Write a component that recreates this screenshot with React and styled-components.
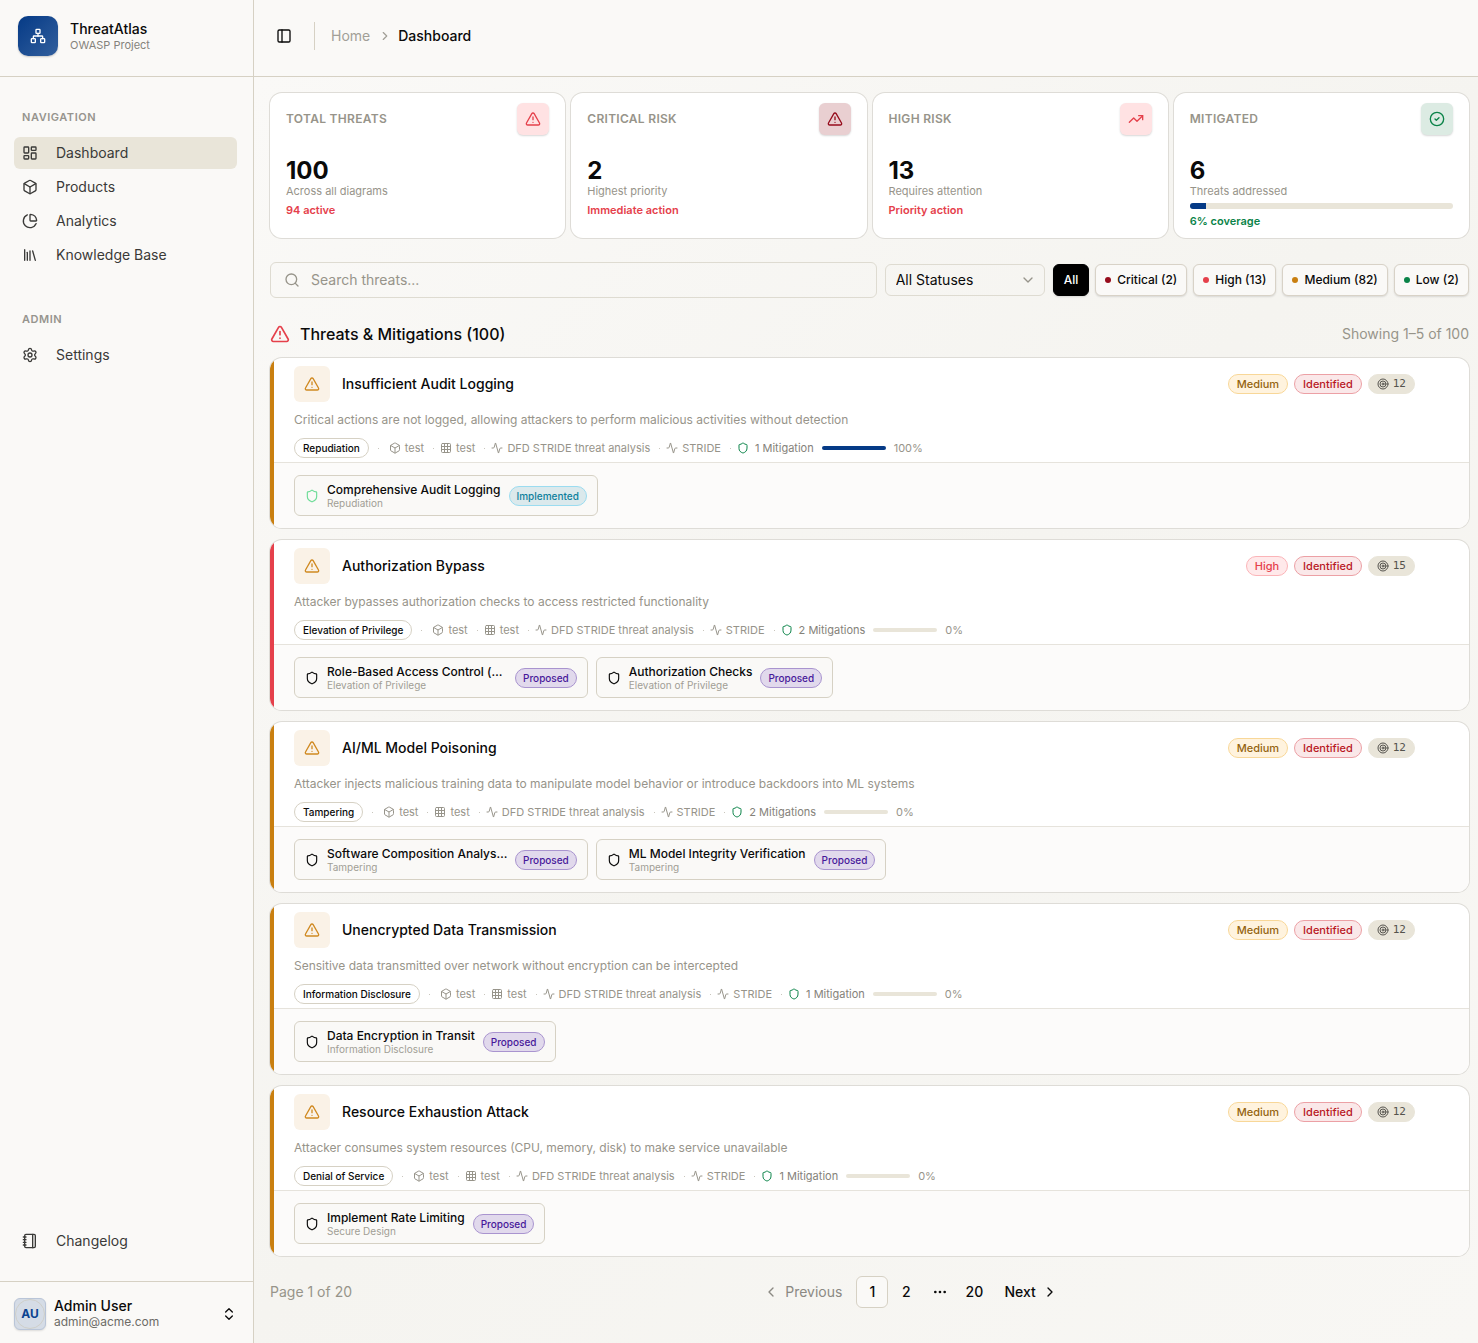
import React from "react";
import styled, { createGlobalStyle, css } from "styled-components";
import {
  Activity,
  Box,
  ChartPie,
  ChevronDown,
  ChevronLeft,
  ChevronRight,
  ChevronsUpDown,
  CircleCheck,
  Ellipsis,
  Grid3x3,
  LayoutDashboard,
  Library,
  Network,
  Notebook,
  PanelLeft,
  Search,
  Settings,
  Shield,
  Target,
  TrendingUp,
  TriangleAlert,
} from "lucide-react";

const c = {
  text: "#0a0a0a",
  nav: "#3a3a38",
  muted: "#97948a",
  line: "#d6d1c4",
  ring: "#dedcd7",
  sand: "#e9e5d9",
  panel: "#faf9f7",
  blue: "#053a86",
  red: "#e5404b",
  darkRed: "#960c1c",
  amber: "#c97f10",
  green: "#0a8348",
};

const GlobalStyle = createGlobalStyle`
  *, *::before, *::after { box-sizing: border-box; }
  body {
    margin: 0;
    color: ${c.text};
    background: ${c.panel};
    font-family: Inter, "Liberation Sans", sans-serif;
    font-size: 14px;
    line-height: 20px;
    -webkit-font-smoothing: antialiased;
  }
  button, input, select { font: inherit; color: inherit; }
  h1, h2, h3, p, ul, ol, dl, dd, dt { margin: 0; padding: 0; font-weight: inherit; font-size: inherit; }
  ul, ol { list-style: none; }
  a { color: inherit; text-decoration: none; }
  svg { flex-shrink: 0; display: block; }
`;

const Shell = styled.div`
  display: grid;
  grid-template-columns: 254px minmax(0, 1fr);
  min-height: 100vh;
`;

const Sidebar = styled.aside`
  position: sticky;
  top: 0;
  height: 100vh;
  display: flex;
  flex-direction: column;
  background: ${c.panel};
  border-right: 1px solid ${c.line};
`;

const Brand = styled.div`
  height: 77px;
  flex-shrink: 0;
  display: flex;
  align-items: flex-start;
  gap: 12px;
  padding: 16px 18px;
  border-bottom: 1px solid ${c.line};
`;

const Logo = styled.div`
  width: 40px;
  height: 40px;
  display: grid;
  place-items: center;
  border-radius: 10px;
  color: #fff;
  background: linear-gradient(135deg, ${c.blue}, #325f9d);
  box-shadow: 0 1px 2px rgba(0, 0, 0, 0.2);
`;

const BrandName = styled.p`
  padding-top: 4px;
  font-size: 14px;
  line-height: 18px;
  font-weight: 500;
`;

const BrandSub = styled.p`
  font-size: 11px;
  line-height: 14px;
  color: #85837c;
`;

const Nav = styled.nav`
  flex: 1;
  display: flex;
  flex-direction: column;
  gap: 32px;
  padding: 24px 16px 24px 14px;
`;

const NavGroup = styled.div`
  display: flex;
  flex-direction: column;
  gap: 4px;
  &:last-child { margin-top: auto; }
`;

const NavLabel = styled.h2`
  padding: 0 8px;
  font-size: 11px;
  line-height: 32px;
  font-weight: 600;
  letter-spacing: 0.05em;
  text-transform: uppercase;
  color: #96948e;
`;

const NavList = styled.ul`
  display: flex;
  flex-direction: column;
  gap: 2px;
`;

const NavLink = styled.a`
  height: 32px;
  display: flex;
  align-items: center;
  gap: 18px;
  padding: 0 8px;
  border-radius: 6px;
  font-size: 14px;
  color: ${c.nav};
  background: ${(p) => (p.$active ? c.sand : "transparent")};
`;

const UserButton = styled.button`
  height: 62px;
  flex-shrink: 0;
  display: flex;
  align-items: center;
  gap: 8px;
  padding: 2px 16px 0 14px;
  border: 0;
  border-top: 1px solid ${c.line};
  background: transparent;
  text-align: left;
`;

const Avatar = styled.span`
  width: 32px;
  height: 32px;
  display: grid;
  place-items: center;
  border-radius: 6px;
  border: 1px solid #b9c5d8;
  background: #d5dce6;
  font-size: 12px;
  box-shadow: 0 1px 2px rgba(0, 0, 0, 0.12);
`;

const AvatarRing = styled.span`
  width: 30px;
  height: 30px;
  display: grid;
  place-items: center;
  border: 1px solid #cfcfc9;
  border-radius: 50%;
  font-weight: 700;
  color: #0c4390;
`;

const UserText = styled.span`
  flex: 1;
  display: flex;
  flex-direction: column;
`;

const UserName = styled.span`
  font-size: 14px;
  line-height: 17px;
  font-weight: 500;
`;

const UserMail = styled.span`
  font-size: 12px;
  line-height: 16px;
  color: #6c6b66;
`;

const Page = styled.div`
  min-width: 0;
  display: flex;
  flex-direction: column;
`;

const TopBar = styled.header`
  height: 77px;
  display: flex;
  align-items: center;
  padding: 0 16px 4px 16px;
  border-bottom: 1px solid ${c.line};
`;

const IconButton = styled.button`
  width: 28px;
  height: 28px;
  display: grid;
  place-items: center;
  padding: 0;
  border: 0;
  background: transparent;
`;

const Crumbs = styled.ol`
  display: flex;
  align-items: center;
  gap: 6px;
  height: 28px;
  margin-left: 16px;
  padding-left: 16px;
  border-left: 1px solid ${c.line};
  color: ${c.muted};
`;

const Crumb = styled.li`
  display: flex;
  align-items: center;
  gap: 8px;
  font-weight: ${(p) => (p.$current ? 500 : 400)};
  color: ${(p) => (p.$current ? c.text : "#a19f97")};
`;

const Main = styled.main`
  flex: 1;
  display: flex;
  flex-direction: column;
  gap: 24px;
  padding: 16px 9px 34px 16px;
  background: linear-gradient(135deg, #faf9f7, #f5f4f0 50%, #f8f7f4);
`;

const Stats = styled.section`
  display: grid;
  grid-template-columns: repeat(4, minmax(0, 1fr));
  gap: 6px;
`;

const StatCard = styled.article`
  display: flex;
  flex-direction: column;
  padding: 10px 16px;
  border-radius: 12px;
  background: #fff;
  box-shadow: 0 0 0 1px ${c.ring};
`;

const StatHead = styled.div`
  display: flex;
  align-items: center;
  justify-content: space-between;
  margin-bottom: 24px;
`;

const StatLabel = styled.h2`
  font-size: 12px;
  font-weight: 600;
  letter-spacing: 0.025em;
  text-transform: uppercase;
  color: ${c.muted};
`;

const tileTones = {
  red: css`color: ${c.red}; background: #ffe2e3;`,
  dark: css`color: ${c.darkRed}; background: #e9cfd1;`,
  green: css`color: ${c.green}; background: #dcebe3;`,
};

const StatTile = styled.span`
  width: 32px;
  height: 32px;
  display: grid;
  place-items: center;
  border-radius: 6px;
  box-shadow: 0 1px 2px rgba(0, 0, 0, 0.16);
  ${(p) => tileTones[p.$tone]}
`;

const StatValue = styled.p`
  font-size: 24px;
  line-height: 24px;
  font-weight: 700;
`;

const StatSub = styled.p`
  font-size: 11px;
  line-height: 16px;
  color: ${c.muted};
`;

const StatNote = styled.p`
  margin-top: 4px;
  font-size: 11px;
  line-height: 14px;
  font-weight: 600;
  color: ${(p) => (p.$good ? c.green : c.red)};
`;

const Track = styled.div`
  width: ${(p) => (p.$wide ? "100%" : "64px")};
  height: ${(p) => (p.$wide ? 6 : 4)}px;
  margin: ${(p) => (p.$wide ? "4px 0 1px" : "0")};
  border-radius: 3px;
  overflow: hidden;
  background: ${c.sand};
`;

const Fill = styled.div`
  height: 100%;
  background: ${c.blue};
`;

const Filters = styled.form`
  display: flex;
  align-items: center;
  gap: 8px;
`;

const SearchBox = styled.label`
  flex: 1;
  height: 36px;
  display: flex;
  align-items: center;
  gap: 11px;
  padding: 0 13px;
  border: 1px solid #dedbd1;
  border-radius: 6px;
  color: ${c.muted};
`;

const SearchInput = styled.input`
  flex: 1;
  min-width: 0;
  padding: 0;
  border: 0;
  outline: 0;
  background: transparent;
  color: ${c.text};
  &::placeholder { color: ${c.muted}; opacity: 1; }
`;

const SelectBox = styled.div`
  width: 160px;
  height: 32px;
  display: grid;
  align-items: center;
  color: ${c.muted};
  > * { grid-area: 1 / 1; }
  > svg { justify-self: end; margin-right: 9px; pointer-events: none; }
`;

const Select = styled.select`
  width: 100%;
  height: 32px;
  padding: 0 28px 0 10px;
  border: 1px solid #dedbd1;
  border-radius: 6px;
  appearance: none;
  background: transparent;
  color: ${c.text};
`;

const FilterGroup = styled.div`
  display: flex;
  gap: 6px;
`;

const FilterButton = styled.button`
  height: 32px;
  display: flex;
  align-items: center;
  gap: 6px;
  padding: 0 ${(p) => (p.$active ? 10 : 9)}px;
  border: 1px solid ${(p) => (p.$active ? "#000" : "#d8d2c7")};
  border-radius: 6px;
  background: ${(p) => (p.$active ? "#000" : c.panel)};
  color: ${(p) => (p.$active ? "#fff" : c.text)};
  font-size: 12px;
  font-weight: 500;
  white-space: nowrap;
  box-shadow: 0 1px 2px rgba(0, 0, 0, 0.12);
`;

const Dot = styled.span`
  width: 6px;
  height: 6px;
  border-radius: 50%;
  background: ${(p) => p.$color};
`;

const ThreatSection = styled.section`
  display: flex;
  flex-direction: column;
  gap: 12px;
`;

const SectionHead = styled.div`
  display: flex;
  align-items: center;
  gap: 10px;
  line-height: 24px;
  > svg { color: ${c.red}; }
`;

const SectionTitle = styled.h1`
  flex: 1;
  font-size: 16px;
  font-weight: 500;
`;

const Showing = styled.p`
  font-size: 14px;
  color: ${c.muted};
`;

const ThreatCard = styled.article`
  display: grid;
  grid-template-columns: 4px minmax(0, 1fr);
  overflow: hidden;
  border-radius: 12px;
  background: #fff;
  box-shadow: 0 0 0 1px ${c.ring};
`;

const SeverityBar = styled.div`
  background: ${(p) => p.$color};
`;

const ThreatBody = styled.div`
  display: flex;
  flex-direction: column;
  gap: 8px;
  padding: 8px 20px 4px;
`;

const ThreatHead = styled.div`
  display: flex;
  align-items: center;
  gap: 12px;
  padding-right: 34px;
`;

const ThreatTile = styled.span`
  width: 36px;
  height: 36px;
  display: grid;
  place-items: center;
  border-radius: 6px;
  color: #d08a22;
  background: #faf2e7;
`;

const ThreatTitle = styled.h3`
  flex: 1;
  font-size: 14px;
  font-weight: 500;
`;

const Badges = styled.div`
  display: flex;
  gap: 6px;
`;

const badgeTones = {
  Medium: css`color: #94640f; background: #fff3de; border-color: #f8d798;`,
  High: css`color: #e5404b; background: #ffe9ea; border-color: #fbb4b8;`,
  Identified: css`color: #b81824; background: #fae8e9; border-color: #eca0a5;`,
  score: css`
    color: #55534d;
    background: ${c.sand};
    border-color: ${c.sand};
    font-family: "DejaVu Sans Mono", monospace;
    font-weight: 400;
  `,
  Proposed: css`color: #47189a; background: #e1d9ec; border-color: #a994cf;`,
  Implemented: css`color: #0e7f9c; background: #dbe9ec; border-color: #9bdcf0;`,
  plain: css`color: ${c.text}; background: #fff; border-color: ${c.line};`,
};

const Badge = styled.span`
  height: 20px;
  display: inline-flex;
  align-items: center;
  gap: 4px;
  padding: 0 ${(p) => (p.$tight ? 7 : 8)}px;
  border: 1px solid;
  border-radius: 10px;
  font-size: ${(p) => (p.$small ? 10 : 11)}px;
  line-height: 18px;
  font-weight: 500;
  white-space: nowrap;
  ${(p) => badgeTones[p.$tone]}
`;

const Description = styled.p`
  font-size: 12px;
  color: ${c.muted};
`;

const Meta = styled.div`
  display: flex;
  align-items: center;
  height: 20px;
  font-size: 11px;
  color: ${c.muted};
`;

const Separator = styled.span`
  margin: 0 ${(p) => (p.$wide ? 10 : 6)}px 0 9px;
  width: 1px;
  height: 1px;
  background: #c9c6bd;
`;

const MetaItem = styled.span`
  display: flex;
  align-items: center;
  gap: 4px;
  white-space: nowrap;
`;

const Coverage = styled.span`
  display: flex;
  align-items: center;
  gap: 8px;
`;

const CoverageCount = styled(MetaItem)`
  gap: 6px;
  color: #85827a;
  > svg { color: ${c.green}; }
`;

const Mitigations = styled.ul`
  display: flex;
  gap: 8px;
  padding: 12px 20px;
  border-top: 1px solid #e6e3dc;
  background: #fcfbfa;
`;

const Mitigation = styled.li`
  height: 41px;
  display: flex;
  align-items: center;
  gap: 8px;
  padding: 0 10px;
  border: 1px solid ${c.line};
  border-radius: 6px;
  background: ${c.panel};
  > svg { color: ${(p) => (p.$done ? "#6edc98" : c.text)}; }
`;

const MitigationText = styled.div`
  width: ${(p) => (p.$long ? "180px" : "auto")};
`;

const MitigationName = styled.p`
  white-space: nowrap;
  font-size: 12px;
  line-height: 15px;
  font-weight: 500;
`;

const MitigationKind = styled.p`
  font-size: 10px;
  line-height: 12px;
  color: #a19e95;
`;

const Footer = styled.footer`
  display: flex;
  align-items: center;
  margin-top: -4px;
  color: ${c.muted};
`;

const Pager = styled.nav`
  flex: 1;
  display: flex;
  align-items: center;
  justify-content: center;
  gap: 2px;
  color: ${c.text};
`;

const PageButton = styled.button`
  min-width: 32px;
  height: 32px;
  display: flex;
  align-items: center;
  justify-content: center;
  gap: 6px;
  padding: ${(p) => p.$pad || "0"};
  border: 1px solid ${(p) => (p.$active ? c.line : "transparent")};
  border-radius: 6px;
  background: ${(p) => (p.$active ? c.panel : "transparent")};
  font-weight: 500;
  &:disabled { color: #8b8983; font-weight: 400; }
`;

const PageGap = styled.span`
  width: 32px;
  display: grid;
  place-items: center;
`;

const navigation = [
  { label: "Dashboard", icon: LayoutDashboard, active: true },
  { label: "Products", icon: Box },
  { label: "Analytics", icon: ChartPie },
  { label: "Knowledge Base", icon: Library },
];

const stats = [
  { label: "Total Threats", value: 100, sub: "Across all diagrams", note: "94 active", icon: TriangleAlert, tone: "red" },
  { label: "Critical Risk", value: 2, sub: "Highest priority", note: "Immediate action", icon: TriangleAlert, tone: "dark" },
  { label: "High Risk", value: 13, sub: "Requires attention", note: "Priority action", icon: TrendingUp, tone: "red" },
  { label: "Mitigated", value: 6, sub: "Threats addressed", note: "6% coverage", icon: CircleCheck, tone: "green", progress: 6 },
];

const severities = [
  { label: "Critical (2)", color: c.darkRed },
  { label: "High (13)", color: c.red },
  { label: "Medium (82)", color: c.amber },
  { label: "Low (2)", color: c.green },
];

const threats = [
  {
    title: "Insufficient Audit Logging",
    text: "Critical actions are not logged, allowing attackers to perform malicious activities without detection",
    level: "Medium", score: 12, kind: "Repudiation", coverage: 100,
    mitigations: [{ name: "Comprehensive Audit Logging", kind: "Repudiation", status: "Implemented" }],
  },
  {
    title: "Authorization Bypass",
    text: "Attacker bypasses authorization checks to access restricted functionality",
    level: "High", score: 15, kind: "Elevation of Privilege", coverage: 0,
    mitigations: [
      { name: "Role-Based Access Control (…", kind: "Elevation of Privilege", status: "Proposed", long: true },
      { name: "Authorization Checks", kind: "Elevation of Privilege", status: "Proposed" },
    ],
  },
  {
    title: "AI/ML Model Poisoning",
    text: "Attacker injects malicious training data to manipulate model behavior or introduce backdoors into ML systems",
    level: "Medium", score: 12, kind: "Tampering", coverage: 0,
    mitigations: [
      { name: "Software Composition Analys…", kind: "Tampering", status: "Proposed", long: true },
      { name: "ML Model Integrity Verification", kind: "Tampering", status: "Proposed" },
    ],
  },
  {
    title: "Unencrypted Data Transmission",
    text: "Sensitive data transmitted over network without encryption can be intercepted",
    level: "Medium", score: 12, kind: "Information Disclosure", coverage: 0,
    mitigations: [{ name: "Data Encryption in Transit", kind: "Information Disclosure", status: "Proposed" }],
  },
  {
    title: "Resource Exhaustion Attack",
    text: "Attacker consumes system resources (CPU, memory, disk) to make service unavailable",
    level: "Medium", score: 12, kind: "Denial of Service", coverage: 0,
    mitigations: [{ name: "Implement Rate Limiting", kind: "Secure Design", status: "Proposed" }],
  },
];

const metaItems = [
  { icon: Box, label: "test" },
  { icon: Grid3x3, label: "test" },
  { icon: Activity, label: "DFD STRIDE threat analysis" },
  { icon: Activity, label: "STRIDE" },
];

function NavItem({ label, icon: Icon, active }) {
  return (
    <li>
      <NavLink href="#" $active={active} aria-current={active ? "page" : undefined}>
        <Icon size={16} />
        {label}
      </NavLink>
    </li>
  );
}

function Stat({ label, value, sub, note, icon: Icon, tone, progress }) {
  return (
    <StatCard>
      <StatHead>
        <StatLabel>{label}</StatLabel>
        <StatTile $tone={tone}><Icon size={16} /></StatTile>
      </StatHead>
      <StatValue>{value}</StatValue>
      <StatSub>{sub}</StatSub>
      {progress !== undefined && (
        <Track $wide><Fill style={{ width: `${progress}%` }} /></Track>
      )}
      <StatNote $good={tone === "green"}>{note}</StatNote>
    </StatCard>
  );
}

function Threat({ title, text, level, score, kind, coverage, mitigations }) {
  const count = mitigations.length;
  return (
    <ThreatCard>
      <SeverityBar $color={level === "High" ? c.red : c.amber} />
      <div>
        <ThreatBody>
          <ThreatHead>
            <ThreatTile><TriangleAlert size={16} /></ThreatTile>
            <ThreatTitle>{title}</ThreatTitle>
            <Badges>
              <Badge $tone={level}>{level}</Badge>
              <Badge $tone="Identified">Identified</Badge>
              <Badge $tone="score"><Target size={12} />{score}</Badge>
            </Badges>
          </ThreatHead>
          <Description>{text}</Description>
          <Meta>
            <Badge $tone="plain" $small>{kind}</Badge>
            <Separator $wide />
            {metaItems.map(({ icon: Icon, label }, i) => (
              <React.Fragment key={i}>
                <MetaItem><Icon size={12} />{label}</MetaItem>
                <Separator />
              </React.Fragment>
            ))}
            <Coverage>
              <CoverageCount><Shield size={12} />{count} {count > 1 ? "Mitigations" : "Mitigation"}</CoverageCount>
              <Track><Fill style={{ width: `${coverage}%` }} /></Track>
              {coverage}%
            </Coverage>
          </Meta>
        </ThreatBody>
        <Mitigations>
          {mitigations.map((m) => (
            <Mitigation key={m.name} $done={m.status === "Implemented"}>
              <Shield size={14} />
              <MitigationText $long={m.long}>
                <MitigationName>{m.name}</MitigationName>
                <MitigationKind>{m.kind}</MitigationKind>
              </MitigationText>
              <Badge $tone={m.status} $small $tight>{m.status}</Badge>
            </Mitigation>
          ))}
        </Mitigations>
      </div>
    </ThreatCard>
  );
}

export default function App() {
  return (
    <>
      <GlobalStyle />
      <Shell>
        <Sidebar>
          <Brand>
            <Logo><Network size={16} /></Logo>
            <div>
              <BrandName>ThreatAtlas</BrandName>
              <BrandSub>OWASP Project</BrandSub>
            </div>
          </Brand>
          <Nav>
            <NavGroup>
              <NavLabel>Navigation</NavLabel>
              <NavList>{navigation.map((n) => <NavItem key={n.label} {...n} />)}</NavList>
            </NavGroup>
            <NavGroup>
              <NavLabel>Admin</NavLabel>
              <NavList><NavItem label="Settings" icon={Settings} /></NavList>
            </NavGroup>
            <NavGroup>
              <NavList><NavItem label="Changelog" icon={Notebook} /></NavList>
            </NavGroup>
          </Nav>
          <UserButton type="button">
            <Avatar><AvatarRing>AU</AvatarRing></Avatar>
            <UserText>
              <UserName>Admin User</UserName>
              <UserMail>admin@acme.com</UserMail>
            </UserText>
            <ChevronsUpDown size={16} />
          </UserButton>
        </Sidebar>
        <Page>
          <TopBar>
            <IconButton type="button" aria-label="Toggle sidebar"><PanelLeft size={16} /></IconButton>
            <Crumbs>
              <Crumb><a href="#">Home</a><ChevronRight size={14} /></Crumb>
              <Crumb $current>Dashboard</Crumb>
            </Crumbs>
          </TopBar>
          <Main>
            <Stats>{stats.map((s) => <Stat key={s.label} {...s} />)}</Stats>
            <Filters onSubmit={(e) => e.preventDefault()}>
              <SearchBox>
                <Search size={16} />
                <SearchInput type="search" placeholder="Search threats..." aria-label="Search threats" />
              </SearchBox>
              <SelectBox>
                <Select aria-label="Status"><option>All Statuses</option></Select>
                <ChevronDown size={16} />
              </SelectBox>
              <FilterGroup>
                <FilterButton type="button" $active>All</FilterButton>
                {severities.map((s) => (
                  <FilterButton type="button" key={s.label}><Dot $color={s.color} />{s.label}</FilterButton>
                ))}
              </FilterGroup>
            </Filters>
            <ThreatSection>
              <SectionHead>
                <TriangleAlert size={20} />
                <SectionTitle>Threats &amp; Mitigations (100)</SectionTitle>
                <Showing>Showing 1–5 of 100</Showing>
              </SectionHead>
              {threats.map((t) => <Threat key={t.title} {...t} />)}
            </ThreatSection>
            <Footer>
              <p>Page 1 of 20</p>
              <Pager aria-label="Pagination">
                <PageButton type="button" disabled $pad="0 11px 0 7px"><ChevronLeft size={16} />Previous</PageButton>
                <PageButton type="button" $active>1</PageButton>
                <PageButton type="button">2</PageButton>
                <PageGap><Ellipsis size={16} /></PageGap>
                <PageButton type="button">20</PageButton>
                <PageButton type="button" $pad="0 7px 0 11px">Next<ChevronRight size={16} /></PageButton>
              </Pager>
            </Footer>
          </Main>
        </Page>
      </Shell>
    </>
  );
}
